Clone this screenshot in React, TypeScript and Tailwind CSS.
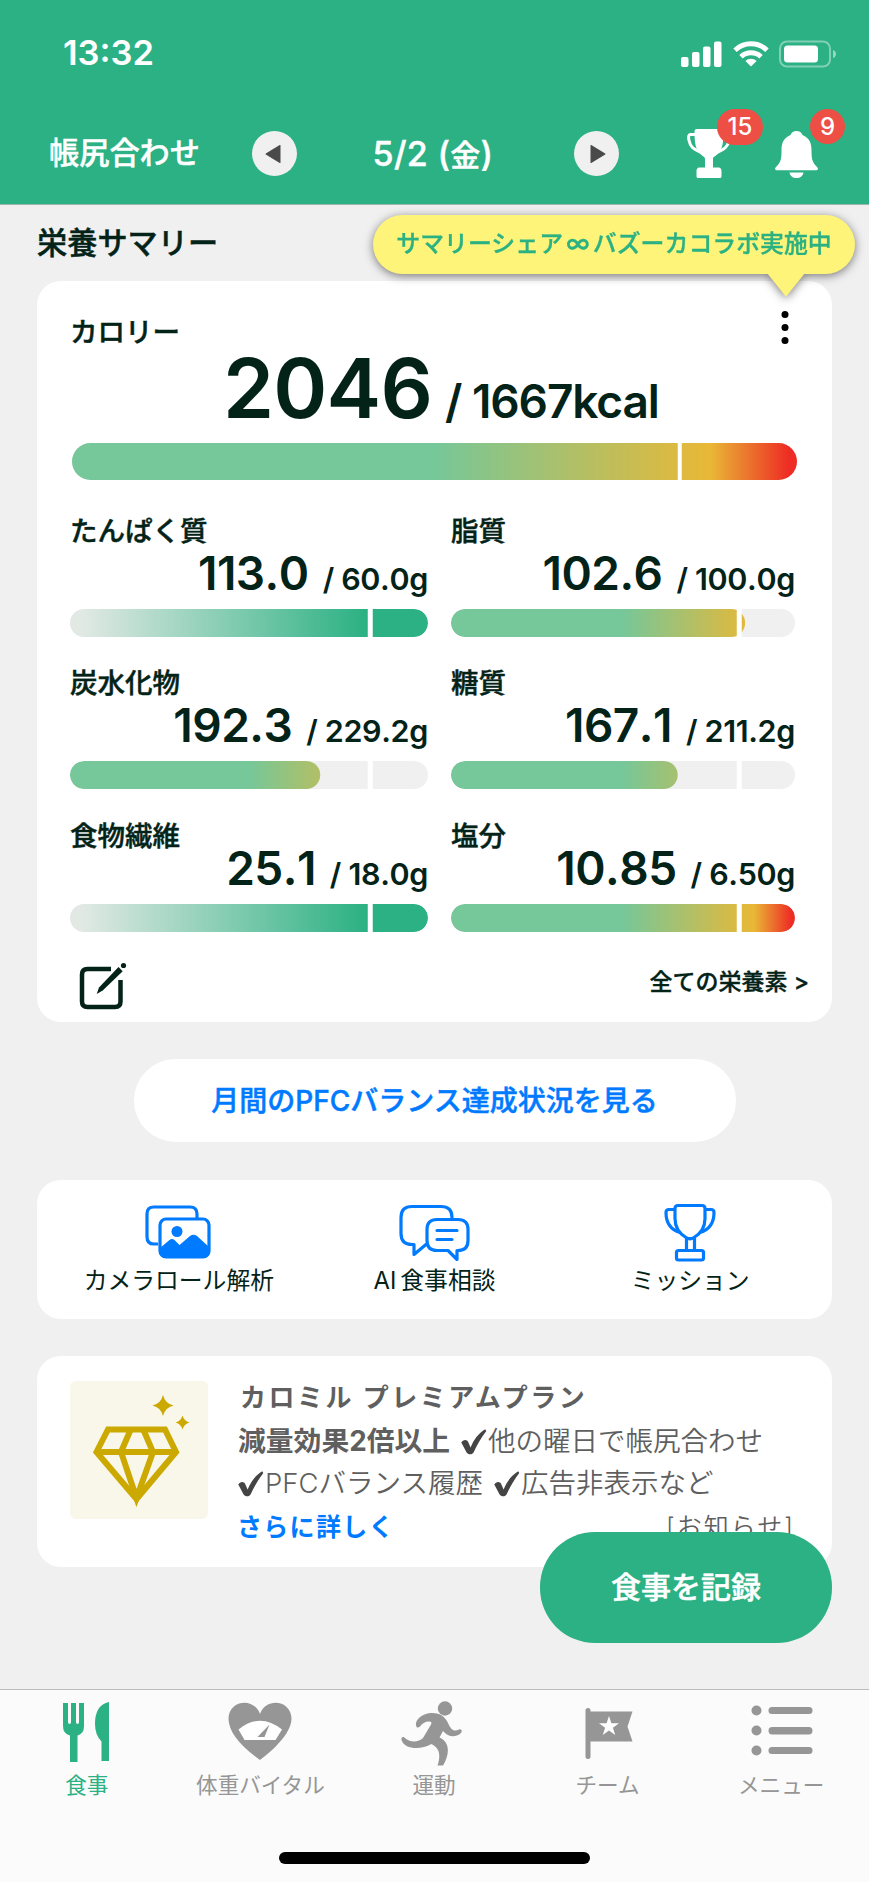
import type { ReactNode } from "react";

type BarKind = "limit" | "goal";

interface Nutrient {
    name: string;
    value: string;
    target: string;
    kind: BarKind;
    fill: number;
}

const rows: { height: string; items: Nutrient[] }[] = [
    {
        height: "h-[152px]",
        items: [
            { name: "たんぱく質", value: "113.0", target: "60.0g", kind: "goal", fill: 100 },
            { name: "脂質", value: "102.6", target: "100.0g", kind: "limit", fill: 85.5 },
        ],
    },
    {
        height: "h-[152px]",
        items: [
            { name: "炭水化物", value: "192.3", target: "229.2g", kind: "limit", fill: 69.9 },
            { name: "糖質", value: "167.1", target: "211.2g", kind: "limit", fill: 65.9 },
        ],
    },
    {
        height: "h-[139px]",
        items: [
            { name: "食物繊維", value: "25.1", target: "18.0g", kind: "goal", fill: 100 },
            { name: "塩分", value: "10.85", target: "6.50g", kind: "limit", fill: 100 },
        ],
    },
];

function ProgressBar({ kind, fill, className }: { kind: BarKind; fill: number; className: string }) {
    const gradient =
        kind === "goal"
            ? "bg-[linear-gradient(90deg,#e2e9e5_3%,#2bb183_83%)]"
            : "bg-[linear-gradient(90deg,#76c799_50%,#e9b836_88%,#ee2b24_99%)]";
    return (
        <div className={`flex overflow-hidden rounded-full bg-[#f0f0f0] ${className}`}>
            <div className="relative h-full w-full">
                <div
                    className={`h-full w-full ${gradient}`}
                    style={{ clipPath: `inset(0 ${100 - fill}% 0 0 round 14px)` }}
                />
                <div className="absolute inset-y-0 left-[83.8%] w-[4.5px] -translate-x-1/2 bg-white" />
            </div>
        </div>
    );
}

function NutrientCell({ item, compact }: { item: Nutrient; compact: boolean }) {
    return (
        <div className="flex flex-col">
            <div
                className={`h-[28px] text-[27.5px] font-medium [-webkit-text-stroke:0.45px] ${
                    compact ? "leading-[30px]" : "leading-[29px]"
                }`}
            >
                {item.name}
            </div>
            <div
                className={`flex items-baseline justify-end font-semibold [font-kerning:none] ${
                    compact ? "h-[55px] leading-[39px]" : "h-[64px] leading-[56px]"
                }`}
            >
                <span className="text-[46px] tracking-[-0.5px]">{item.value}</span>
                <span className="ml-[14px] text-[30.5px] tracking-[-0.35px]">/ {item.target}</span>
            </div>
            <ProgressBar kind={item.kind} fill={item.fill} className="h-[28px]" />
        </div>
    );
}

function StatusBar() {
    return (
        <div className="flex h-[107px] items-center justify-between pr-[32px] pl-[63px]">
            <span className="text-[34.5px] leading-none font-semibold">13:32</span>
            <div className="flex items-center">
                <svg className="h-[26px] w-[41px]" viewBox="0 0 41 26" fill="white">
                    <rect x="0" y="16" width="7.5" height="10" rx="2" />
                    <rect x="11" y="11" width="7.5" height="15" rx="2" />
                    <rect x="22" y="5.5" width="7.5" height="20.5" rx="2" />
                    <rect x="33" y="0.5" width="7.5" height="25.5" rx="2" />
                </svg>
                <svg className="ml-[11px] h-[26px] w-[36px]" viewBox="0 0 36 26">
                    <g fill="none" stroke="white" strokeWidth="5">
                        <path d="M2 9.2a23.2 23.2 0 0 1 32 0" />
                        <path d="M8 15.8a14.6 14.6 0 0 1 20 0" />
                    </g>
                    <path d="M18 25.5l-5.6-5.4a8 8 0 0 1 11.2 0z" fill="white" />
                </svg>
                <svg className="ml-[10px] h-[28px] w-[58px]" viewBox="0 0 58 28">
                    <rect x="1" y="1.5" width="50" height="25" rx="7" fill="none" stroke="white" strokeOpacity="0.4" strokeWidth="2" />
                    <rect x="5" y="5.5" width="34" height="17" rx="3.5" fill="white" />
                    <path d="M54 10q3 1 3 4t-3 4z" fill="white" fillOpacity="0.5" />
                </svg>
            </div>
        </div>
    );
}

function ArrowButton({ direction }: { direction: "left" | "right" }) {
    return (
        <button className="flex size-[45px] items-center justify-center rounded-full bg-[#f0f0f0]">
            <svg className="size-[20px]" viewBox="0 0 20 20" fill="#4a4a4a">
                {direction === "left" ? (
                    <path d="M15.5 1.5v17q0 .8-.8.4L.8 10.5q-.6-.5 0-1L14.7 1.1q.8-.4.8.4z" />
                ) : (
                    <path d="M3.5 1.5v17q0 .8.8.4l13.9-8.4q.6-.5 0-1L4.3 1.1q-.8-.4-.8.4z" />
                )}
            </svg>
        </button>
    );
}

function Header() {
    return (
        <header className="h-[205px] border-b border-[#9fb5ac] bg-[#2bb183] text-white">
            <StatusBar />
            <div className="flex h-[93px] items-center pl-[49px]">
                <span className="w-[203px] pb-px text-[30.2px] leading-none font-medium [-webkit-text-stroke:0.45px]">
                    帳尻合わせ
                </span>
                <ArrowButton direction="left" />
                <span className="w-[277px] pr-[5px] text-center text-[34px] leading-none font-medium tracking-[0.3px] [-webkit-text-stroke:0.45px]">
                    5/2 (<span className="text-[30px]">金</span>)
                </span>
                <ArrowButton direction="right" />
                <div className="relative ml-[68px] h-[49px] w-[44px]">
                    <svg className="h-[49px] w-[44px]" viewBox="0 0 44 49">
                        <path
                            d="M9 5.5H3.2C0 5.5 2 15 5.5 18.5S13 22 17 25.5M35 5.5h5.8C44 5.5 42 15 38.5 18.5S31 22 27 25.5"
                            fill="none"
                            stroke="white"
                            strokeWidth="3"
                        />
                        <path
                            d="M10 0h24c2 0 2.5 1 2.5 3 0 12-1.5 17-5 21-3 3.5-5.5 3.5-5.5 6v8.5h5c3 0 3.5 2 3.5 4V47c0 1.5-.5 2-2 2h-21c-1.5 0-2-.5-2-2v-4.5c0-2 .5-4 3.5-4h5V30c0-2.5-2.5-2.5-5.5-6-3.5-4-5-9-5-21 0-2 .5-3 2.5-3z"
                            fill="white"
                        />
                    </svg>
                    <span className="absolute -top-[20px] left-[30px] flex h-[36px] w-[46px] items-center justify-center rounded-full bg-[#ee4f45] text-[24px] font-medium">
                        15
                    </span>
                </div>
                <div className="relative ml-[44px] h-[49px] w-[43px]">
                    <svg className="h-[49px] w-[43px]" viewBox="0 0 43 49" fill="white">
                        <path d="M21.5 2c3 0 5 1.5 6 4 7 3 9 8 9 15 0 9 .5 12 5.5 17 2 2 .5 3.3-1.5 3.3h-38C.5 41.3-1 40 1 38c5-5 5.5-8 5.5-17 0-7 2-12 9-15 1-2.5 3-4 6-4z" />
                        <path d="M14.5 43.5h14c-1 7.5-13 7.5-14 0z" />
                    </svg>
                    <span className="absolute -top-[20px] left-[35px] flex size-[35px] items-center justify-center rounded-full bg-[#ee4f45] text-[24px] font-medium">
                        9
                    </span>
                </div>
            </div>
        </header>
    );
}

function CampaignTooltip() {
    return (
        <div className="absolute top-[10px] left-[373px] drop-shadow-[0_2px_5px_rgba(0,0,0,0.5)]">
            <div className="flex h-[59px] w-[482px] items-center justify-center rounded-full bg-[#fff47a] pb-[2px] text-[23.9px] leading-none font-medium whitespace-nowrap text-[#2bb183] [-webkit-text-stroke:0.35px]">
                サマリーシェア
                <span className="mx-[3px] text-[25px]">∞</span>
                バズーカコラボ実施中
            </div>
            <svg className="ml-[394px] -mt-px h-[24px] w-[38px]" viewBox="0 0 38 24" fill="#fff47a">
                <path d="M0 0h38L20 22.5q-1 1-2 0z" />
            </svg>
        </div>
    );
}

function SummaryCard() {
    return (
        <section className="mx-[37px] h-[741px] rounded-[24px] bg-white pl-[33px]">
            <div className="flex h-[68px] justify-between pt-[30px] pr-[43px]">
                <h2 className="h-[38px] text-[27.5px] leading-[42px] font-medium [-webkit-text-stroke:0.45px]">カロリー</h2>
                <svg className="h-[34px] w-[8px]" viewBox="0 0 8 34" fill="black">
                    <circle cx="4" cy="3.5" r="3.5" />
                    <circle cx="4" cy="16.5" r="3.5" />
                    <circle cx="4" cy="29.5" r="3.5" />
                </svg>
            </div>
            <div className="flex h-[94px] items-baseline pl-[153px] leading-[80px] font-semibold">
                <span className="text-[82px] tracking-[-0.8px]">2046</span>
                <span className="ml-[13px] text-[46px] tracking-[-1.1px]">/ 1667kcal</span>
            </div>
            <ProgressBar kind="limit" fill={100} className="ml-[2px] h-[37px] w-[725px]" />
            <div className="pt-[37px]">
                {rows.map((row, i) => (
                    <div key={i} className={`grid grid-cols-[358px_344px] gap-x-[23px] ${row.height}`}>
                        {row.items.map((item) => (
                            <NutrientCell key={item.name} item={item} compact={i === 2} />
                        ))}
                    </div>
                ))}
            </div>
            <div className="flex justify-between pr-[23px] pl-[8px]">
                <svg className="mt-px h-[50px] w-[50px]" viewBox="0 0 50 50" fill="none">
                    <path
                        d="M33 8H9.5Q4 8 4 13.5v27Q4 46 9.500 46h27.500q5.500 0 5.500-5.500V19"
                        stroke="#042318"
                        strokeWidth="4.5"
                    />
                    <path d="M40.500 6l4.200 4.200-20 19.300-6 3.500 2.300-6.500z" fill="#042318" />
                    <circle cx="45.500" cy="4.500" r="2.600" fill="#042318" />
                </svg>
                <span className="pt-[10px] text-[23px] leading-[24px] font-medium [-webkit-text-stroke:0.35px]">
                    全ての栄養素 &gt;
                </span>
            </div>
        </section>
    );
}

function Shortcut({ label, children }: { label: ReactNode; children: ReactNode }) {
    return (
        <div className="flex flex-col items-center pt-[22px]">
            {children}
            <span className="mt-[5px] text-[23.8px] leading-[28px] whitespace-nowrap">{label}</span>
        </div>
    );
}

function Shortcuts() {
    return (
        <section className="mx-[37px] mt-[38px] grid h-[139px] grid-cols-3 rounded-[24px] bg-white px-[14px]">
            <Shortcut label="カメラロール解析">
                <svg className="mr-[2px] h-[60px] w-[66px]" viewBox="0 0 66 60" fill="none" stroke="#007aff" strokeWidth="3.2">
                    <path d="M13 42H9q-7 0-7-7V12q0-7 7-7h36q7 0 7 7v5" />
                    <rect x="15" y="17" width="49" height="38" rx="6" />
                    <circle cx="32" cy="29.5" r="5.5" fill="#007aff" stroke="none" />
                    <path
                        d="M15 46l9.5-8q2.5-2 5 0l5 5 10.5-9q3.5-2.5 7 0l12 11v5q0 6-6 6H21q-6 0-6-6z"
                        fill="#007aff"
                        stroke="none"
                    />
                </svg>
            </Shortcut>
            <Shortcut label={<>AI<span className="ml-[4px]">食事相談</span></>}>
                <svg className="ml-[2px] h-[60px] w-[72px]" viewBox="0 0 72 60" fill="none" stroke="#007aff" strokeWidth="3.2" strokeLinejoin="round" strokeLinecap="round">
                    <path d="M53 16.500v-1q0-11-11-11H13Q2 4.500 2 15.500v16q0 11 11 11h2v10l12-10" />
                    <path d="M38 17.500h21q10 0 10 10v11q0 10-10 10h-1v9l-9-9H38q-10 0-10-10v-11q0-10 10-10z" />
                    <path d="M38 28.500h20M38 37.500h15" />
                </svg>
            </Shortcut>
            <Shortcut label="ミッション">
                <svg className="mr-px h-[60px] w-[52px]" viewBox="0 0 52 60" fill="none" stroke="#007aff" strokeWidth="3.2" strokeLinejoin="round">
                    <path d="M14 3.500h24q3 0 3 3v10c0 10-6 16-11 19q-4 2.500-8 0C17 32.500 11 26.500 11 16.500V6.500q0-3 3-3z" />
                    <path d="M11 7.500H5Q2 7.500 2 10.500c0 9 4 17 14 20M41 7.500h6q3 0 3 3c0 9-4 17-14 20" />
                    <path d="M22.500 36v12M30.500 36v12" />
                    <rect x="12.500" y="48.500" width="27" height="9.500" rx="2" />
                </svg>
            </Shortcut>
        </section>
    );
}

function Check() {
    return (
        <svg className="mr-px h-[26px] w-[26px] shrink-0" viewBox="0 0 26 26" fill="#444">
            <path d="M.3 13.500C2 10.500 6 10 7.400 13.500l2.200 5C13 10 18 4 24.200.3l1.100 1.700C20 9 16 16 12.800 23 11.500 26 7.200 26 5.600 23.500z" />
        </svg>
    );
}

function PremiumCard() {
    return (
        <section className="mx-[37px] mt-[37px] flex h-[211px] rounded-[24px] bg-white pt-[25px] pl-[33px] text-[#5f5f5f]">
            <div className="size-[138px] shrink-0 rounded-[6px] bg-[#f9f6ea]">
                <svg className="size-[138px]" viewBox="0 0 138 138">
                    <g fill="none" stroke="#cba900" strokeWidth="6">
                        <path d="M38 48.500h57l11 22.500-39.500 47L26.500 71z" />
                        <path d="M27 71h79M60.500 49L51 71l15.500 46L83 71l-9.500-22" />
                    </g>
                    <path d="M93 14q2 8.500 10.500 10.500Q95 26.500 93 35q-2-8.500-10.500-10.500Q91 22.500 93 14zM112.500 34.500q1.500 5.500 7 7-5.500 1.500-7 7-1.500-5.500-7-7 5.500-1.500 7-7z" fill="#cba900" />
                </svg>
            </div>
            <div className="ml-[30px] flex flex-col text-[27.5px]">
                <h3 className="h-[40px] pl-[2px] text-[26px] leading-[34px] font-bold tracking-[2.5px] whitespace-nowrap">
                    カロミル プレミアムプラン
                </h3>
                <p className="flex h-[42px] items-center font-[350] whitespace-nowrap">
                    <b className="mr-[11px] text-[27.8px] font-bold">減量効果2倍以上</b>
                    <Check />
                    他の曜日で帳尻合わせ
                </p>
                <p className="flex h-[42px] items-center font-[350] whitespace-nowrap">
                    <Check />
                    <span className="mr-[11px]">PFCバランス履歴</span>
                    <Check />
                    広告非表示など
                </p>
                <div className="flex h-[46px] w-[557px] items-center justify-between">
                    <a className="-ml-px text-[25px] font-bold tracking-[1.3px] text-[#007aff]">さらに詳しく</a>
                    <span className="text-[25px] font-[350] tracking-[2px]">[お知らせ]</span>
                </div>
            </div>
        </section>
    );
}

function Tab({ label, active, children }: { label: string; active?: boolean; children: ReactNode }) {
    return (
        <div className={`flex flex-1 flex-col items-center pt-[10px] ${active ? "text-[#2bb183]" : "text-[#969696]"}`}>
            <div className="flex h-[68px] items-start">{children}</div>
            <span className="pt-[5px] text-[21.6px] leading-[24px] whitespace-nowrap">{label}</span>
        </div>
    );
}

function TabBar() {
    return (
        <nav className="flex h-[193px] flex-col border-t border-[#bdbdbd] bg-[#fbfbfb]">
            <div className="flex h-[161px] pr-px">
                <Tab label="食事" active>
                    <svg className="mt-[2px] mr-px h-[61px] w-[46px]" viewBox="0 0 46 61" fill="currentColor">
                        <path d="M0 1h5v19q0 2 1.5 2T8 20V1h5v19q0 2 1.5 2T16 20V1h5v23q0 8-6.5 9.5V60h-7.5V33.5Q0 32 0 24z" />
                        <path d="M46 0v59h-7.5V39.5Q32 33 32 22 32 3 46 0z" />
                    </svg>
                </Tab>
                <Tab label="体重バイタル">
                    <svg className="mt-[2px] h-[59px] w-[64px]" viewBox="0 0 64 59">
                        <path d="M32 58Q1 36 .5 17C.5-2 26-5 32 12 38-5 63.5-2 63.5 17 63 36 32 58 32 58z" fill="currentColor" />
                        <path d="M10.5 27.5Q32 10 54 27.5L47.5 38h-31z" fill="white" />
                        <path d="M41.5 22.5L36.5 35h-7z" fill="currentColor" />
                    </svg>
                </Tab>
                <Tab label="運動">
                    <svg className="mr-[4px] h-[67px] w-[61px]" viewBox="0 0 61 67">
                        <circle cx="44" cy="8.5" r="7.2" fill="currentColor" />
                        <path
                            d="M15 25C14 21 20 13 31 13c9 0 13 4 16 10 3 7 6 9 11 6.5 3-1 3.5 2 1.5 4C54 38 47 37 42 31l-3.5 6.5C49 42 49 54 42 65.5h-5.5c3-9 3-17-6-21.5C20 50 4 50 .5 40 0 37 2 36 4.5 38.5 10 43 18 42 22 38l8-13.5q1.5-3-2-3c-4 0-7 2-9 5-2 2-4 1-4-1.5z"
                            fill="currentColor"
                        />
                    </svg>
                </Tab>
                <Tab label="チーム">
                    <svg className="mt-[8px] ml-[3px] h-[51px] w-[48px]" viewBox="0 0 48 51" fill="currentColor">
                        <rect x="0.5" y="0" width="5" height="51" rx="2.5" />
                        <path d="M5 3.5h42.5l-5 15 5 15H5z" />
                        <path
                            fill="white"
                            d="M24 8l2.4 7.2H34l-6.1 4.5 2.3 7.3-6.2-4.5-6.2 4.5 2.3-7.3-6.1-4.5h7.6z"
                        />
                    </svg>
                </Tab>
                <Tab label="メニュー">
                    <svg className="mt-[5px] ml-px h-[51px] w-[62px]" viewBox="0 0 62 51" fill="currentColor">
                        <circle cx="5.5" cy="5.5" r="5" />
                        <circle cx="5.5" cy="25.5" r="5" />
                        <circle cx="5.5" cy="45.5" r="5" />
                        <rect x="17.5" y="2" width="44" height="7" rx="3.5" />
                        <rect x="17.5" y="22" width="44" height="7.5" rx="3.7" />
                        <rect x="17.5" y="42" width="44" height="7" rx="3.5" />
                    </svg>
                </Tab>
            </div>
            <div className="mx-auto mt-px h-[11.5px] w-[311px] rounded-full bg-black" />
        </nav>
    );
}

export default function App() {
    return (
        <div className="flex h-[1882px] w-[869px] flex-col overflow-hidden bg-[#f0f0f0] font-[Inter,'Noto_Sans_CJK_JP',sans-serif] text-[#042318]">
            <Header />
            <main className="relative flex-1">
                <h1 className="h-[76px] pl-[37px] text-[30.2px] leading-[76px] font-medium [-webkit-text-stroke:0.45px]">
                    栄養サマリー
                </h1>
                <SummaryCard />
                <CampaignTooltip />
                <button className="mx-auto mt-[37px] flex h-[83px] w-[602px] items-center justify-center rounded-full bg-white text-[28px] font-medium text-[#007aff] [-webkit-text-stroke:0.45px]">
                    月間のPFCバランス達成状況を見る
                </button>
                <Shortcuts />
                <PremiumCard />
                <button className="absolute right-[37px] bottom-[46px] h-[111px] w-[292px] rounded-[55px] bg-[#2bb183] text-[30px] font-medium text-white [-webkit-text-stroke:0.45px]">
                    食事を記録
                </button>
            </main>
            <TabBar />
        </div>
    );
}
